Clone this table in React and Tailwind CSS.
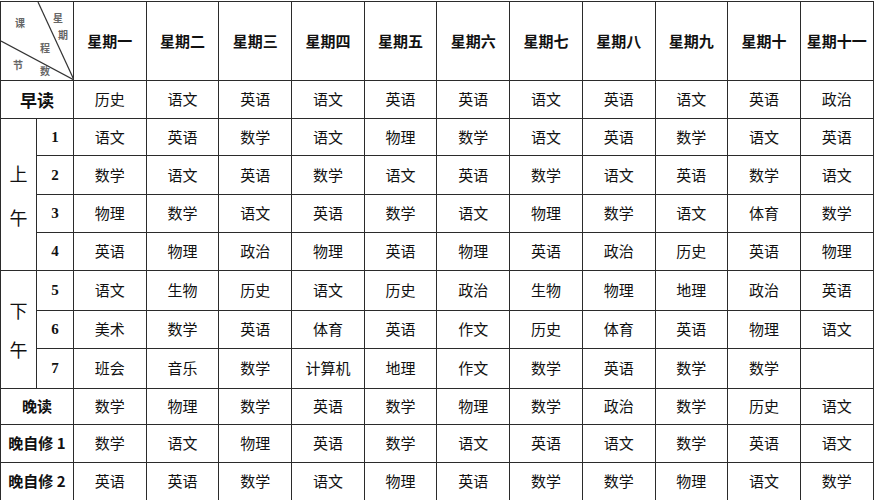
const days = ['星期一', '星期二', '星期三', '星期四', '星期五', '星期六', '星期七', '星期八', '星期九', '星期十', '星期十一'];

const morningRead = ['历史', '语文', '英语', '语文', '英语', '英语', '语文', '英语', '语文', '英语', '政治'];

const am = [
  ['语文', '英语', '数学', '语文', '物理', '数学', '语文', '英语', '数学', '语文', '英语'],
  ['数学', '语文', '英语', '数学', '语文', '英语', '数学', '语文', '英语', '数学', '语文'],
  ['物理', '数学', '语文', '英语', '数学', '语文', '物理', '数学', '语文', '体育', '数学'],
  ['英语', '物理', '政治', '物理', '英语', '物理', '英语', '政治', '历史', '英语', '物理'],
];

const pm = [
  ['语文', '生物', '历史', '语文', '历史', '政治', '生物', '物理', '地理', '政治', '英语'],
  ['美术', '数学', '英语', '体育', '英语', '作文', '历史', '体育', '英语', '物理', '语文'],
  ['班会', '音乐', '数学', '计算机', '地理', '作文', '数学', '英语', '数学', '数学', ''],
];

const evening = [
  { label: '晚读', h: 'h-[36px]', cells: ['数学', '物理', '数学', '英语', '数学', '物理', '数学', '政治', '数学', '历史', '语文'] },
  { label: '晚自修 1', h: 'h-[38px]', cells: ['数学', '语文', '物理', '英语', '数学', '语文', '英语', '语文', '数学', '英语', '语文'] },
  { label: '晚自修 2', h: 'h-[38px]', cells: ['英语', '英语', '数学', '语文', '物理', '英语', '数学', '数学', '物理', '语文', '数学'] },
];

const amHeights = ['h-[37px]', 'h-[39px]', 'h-[38px]', 'h-[38px]'];
const pmHeights = ['h-[40px]', 'h-[38px]', 'h-[40px]'];

const cell = 'border border-[#2b2b2b] text-center align-middle p-0 text-[15px] text-[#111]';

function Cells({ items }) {
  return items.map((s, i) => (
    <td key={i} className={cell}>
      {s}
    </td>
  ));
}

function Corner() {
  return (
    <div className="relative h-[78px] w-full">
      <svg className="absolute inset-0" width="73" height="78" viewBox="0 0 73 78">
        <line x1="37" y1="0" x2="73" y2="78" stroke="#333" strokeWidth="1.2" />
        <line x1="0" y1="39" x2="73" y2="78" stroke="#333" strokeWidth="1.2" />
      </svg>
      <span className="absolute left-[14px] top-[13px] text-[10px] text-[#666]">课</span>
      <span className="absolute left-[52px] top-[8px] text-[10px] text-[#666]">星</span>
      <span className="absolute left-[57px] top-[25px] text-[10px] text-[#666]">期</span>
      <span className="absolute left-[39px] top-[38px] text-[10px] text-[#666]">程</span>
      <span className="absolute left-[12px] top-[55px] text-[10px] text-[#666]">节</span>
      <span className="absolute left-[39px] top-[61px] text-[10px] text-[#666]">数</span>
    </div>
  );
}

export default function App() {
  return (
    <div
      className="w-[874px] h-[500px] bg-white"
      style={{ fontFamily: '"Noto Sans CJK SC", "Liberation Serif", sans-serif' }}
    >
      <table className="table-fixed border-collapse w-[873px] mt-[1px]">
        <colgroup>
          <col className="w-[36px]" />
          <col className="w-[37px]" />
          {days.map((d) => (
            <col key={d} className="w-[72.7px]" />
          ))}
        </colgroup>
        <tbody>
          <tr className="h-[78px]">
            <th colSpan={2} className="border border-[#2b2b2b] p-0">
              <Corner />
            </th>
            {days.map((d) => (
              <th key={d} className={`${cell} font-bold`}>
                {d}
              </th>
            ))}
          </tr>
          <tr className="h-[38px]">
            <td colSpan={2} className={`${cell} text-[17px] font-bold`}>
              早读
            </td>
            <Cells items={morningRead} />
          </tr>
          {am.map((row, i) => (
            <tr key={i} className={amHeights[i]}>
              {i === 0 && (
                <td rowSpan={4} className={`${cell} text-[18px] leading-[44px]`}>
                  上<br />午
                </td>
              )}
              <td className={`${cell} font-bold`} style={{ fontFamily: '"Liberation Serif", serif' }}>
                {i + 1}
              </td>
              <Cells items={row} />
            </tr>
          ))}
          {pm.map((row, i) => (
            <tr key={i} className={pmHeights[i]}>
              {i === 0 && (
                <td rowSpan={3} className={`${cell} text-[18px] leading-[39px]`}>
                  下<br />午
                </td>
              )}
              <td className={`${cell} font-bold`} style={{ fontFamily: '"Liberation Serif", serif' }}>
                {i + 5}
              </td>
              <Cells items={row} />
            </tr>
          ))}
          {evening.map((r) => (
            <tr key={r.label} className={r.h}>
              <td colSpan={2} className={`${cell} text-[14px] font-bold`}>
                {r.label}
              </td>
              <Cells items={r.cells} />
            </tr>
          ))}
        </tbody>
      </table>
    </div>
  );
}
